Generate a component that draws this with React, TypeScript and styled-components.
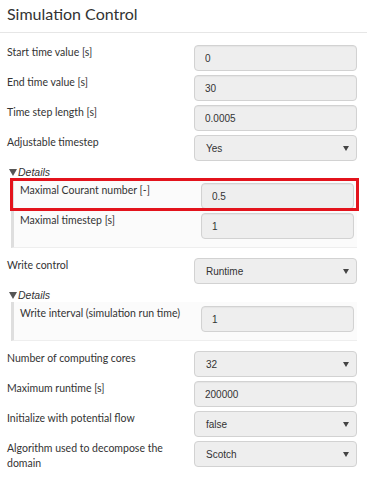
import React from "react";
import styled, { createGlobalStyle } from "styled-components";

const Global = createGlobalStyle`
  html, body { margin: 0; padding: 0; background: #fff; }
  body { font-family: Lato, "Open Sans", sans-serif; color: #333; }
  * { box-sizing: border-box; }
`;

const Page = styled.div`
  width: 367px;
  background: #fff;
`;

const Header = styled.div`
  padding: 4px 7px 8px;
  border-bottom: 1px solid #e6e6e6;
`;

const Title = styled.h1`
  margin: 0;
  font-family: Lato, sans-serif;
  font-weight: 400;
  font-size: 16px;
  line-height: 20px;
  color: #333;
`;

const Body = styled.div`
  padding: 12px 10px 20px 7px;
`;

const Row = styled.div<{ $nested?: boolean }>`
  position: relative;
  display: grid;
  grid-template-columns: ${(p) => (p.$nested ? "181px 153px" : "187px 163px")};
  align-items: start;
  margin-bottom: 4px;
`;

const Label = styled.div`
  font-family: Lato, sans-serif;
  font-size: 10.5px;
  line-height: 14.5px;
  color: #333;
  padding-right: 20px;
`;

const Field = styled.input`
  width: 100%;
  height: 26px;
  margin: 0;
  padding: 0 0 0 10px;
  border: 1px solid #d2d2d2;
  border-radius: 4px;
  background: #eeeeee;
  font-family: "Liberation Sans", Arial, sans-serif;
  font-size: 10px;
  color: #333;
  outline: none;
  box-shadow: inset 0 1px 1px rgba(0, 0, 0, 0.04);
`;

const SelectBox = styled.div`
  height: 26px;
  display: flex;
  align-items: center;
  justify-content: space-between;
  padding: 0 7px 0 11px;
  border: 1px solid #d2d2d2;
  border-radius: 4px;
  background: #eeeeee;
  font-family: "Liberation Sans", Arial, sans-serif;
  font-size: 10px;
  color: #333;
`;

const DetailsGroup = styled.div`
  margin: 0 0 10px 0;
`;

const Summary = styled.div`
  display: flex;
  align-items: center;
  gap: 1px;
  height: 14px;
  padding-left: 2px;
  font-family: "Liberation Sans", Arial, sans-serif;
  font-style: italic;
  font-size: 10.5px;
  color: #333;
`;

const DetailsBox = styled.div`
  margin-left: 4px;
  padding: 4px 3px 4px 6px;
  border-left: 3px solid #dedede;
  border-bottom: 1px solid #eeeeee;
  background: #fbfbfb;
`;

const Highlight = styled.div`
  position: absolute;
  left: -10px;
  right: -5px;
  top: -5px;
  bottom: -2px;
  border: 3px solid #e3131c;
  pointer-events: none;
`;

const Arrow = () => (
  <svg width="6" height="5" viewBox="0 0 6 5">
    <polygon points="0,0 6,0 3,5" fill="#444" />
  </svg>
);

const Caret = () => (
  <svg width="8" height="7" viewBox="0 0 8 7">
    <polygon points="0,0 8,0 4,7" fill="#555" />
  </svg>
);

type Item =
  | { kind: "input"; label: string; value: string; highlight?: boolean }
  | { kind: "select"; label: string; value: string };

const FormRow: React.FC<{ item: Item; nested?: boolean }> = ({ item, nested }) => (
  <Row $nested={nested}>
    <Label>{item.label}</Label>
    {item.kind === "input" ? (
      <Field readOnly value={item.value} />
    ) : (
      <SelectBox>
        <span>{item.value}</span>
        <Arrow />
      </SelectBox>
    )}
    {item.kind === "input" && item.highlight ? <Highlight /> : null}
  </Row>
);

const Details: React.FC<{ items: Item[] }> = ({ items }) => (
  <DetailsGroup>
    <Summary>
      <Caret />
      <span>Details</span>
    </Summary>
    <DetailsBox>
      {items.map((it) => (
        <FormRow key={it.label} item={it} nested />
      ))}
    </DetailsBox>
  </DetailsGroup>
);

export default function App() {
  return (
    <Page>
      <Global />
      <Header>
        <Title>Simulation Control</Title>
      </Header>
      <Body>
        <FormRow item={{ kind: "input", label: "Start time value [s]", value: "0" }} />
        <FormRow item={{ kind: "input", label: "End time value [s]", value: "30" }} />
        <FormRow item={{ kind: "input", label: "Time step length [s]", value: "0.0005" }} />
        <FormRow item={{ kind: "select", label: "Adjustable timestep", value: "Yes" }} />
        <Details
          items={[
            { kind: "input", label: "Maximal Courant number [-]", value: "0.5", highlight: true },
            { kind: "input", label: "Maximal timestep [s]", value: "1" },
          ]}
        />
        <FormRow item={{ kind: "select", label: "Write control", value: "Runtime" }} />
        <Details
          items={[{ kind: "input", label: "Write interval (simulation run time)", value: "1" }]}
        />
        <FormRow item={{ kind: "select", label: "Number of computing cores", value: "32" }} />
        <FormRow item={{ kind: "input", label: "Maximum runtime [s]", value: "200000" }} />
        <FormRow item={{ kind: "select", label: "Initialize with potential flow", value: "false" }} />
        <FormRow
          item={{ kind: "select", label: "Algorithm used to decompose the domain", value: "Scotch" }}
        />
      </Body>
    </Page>
  );
}
